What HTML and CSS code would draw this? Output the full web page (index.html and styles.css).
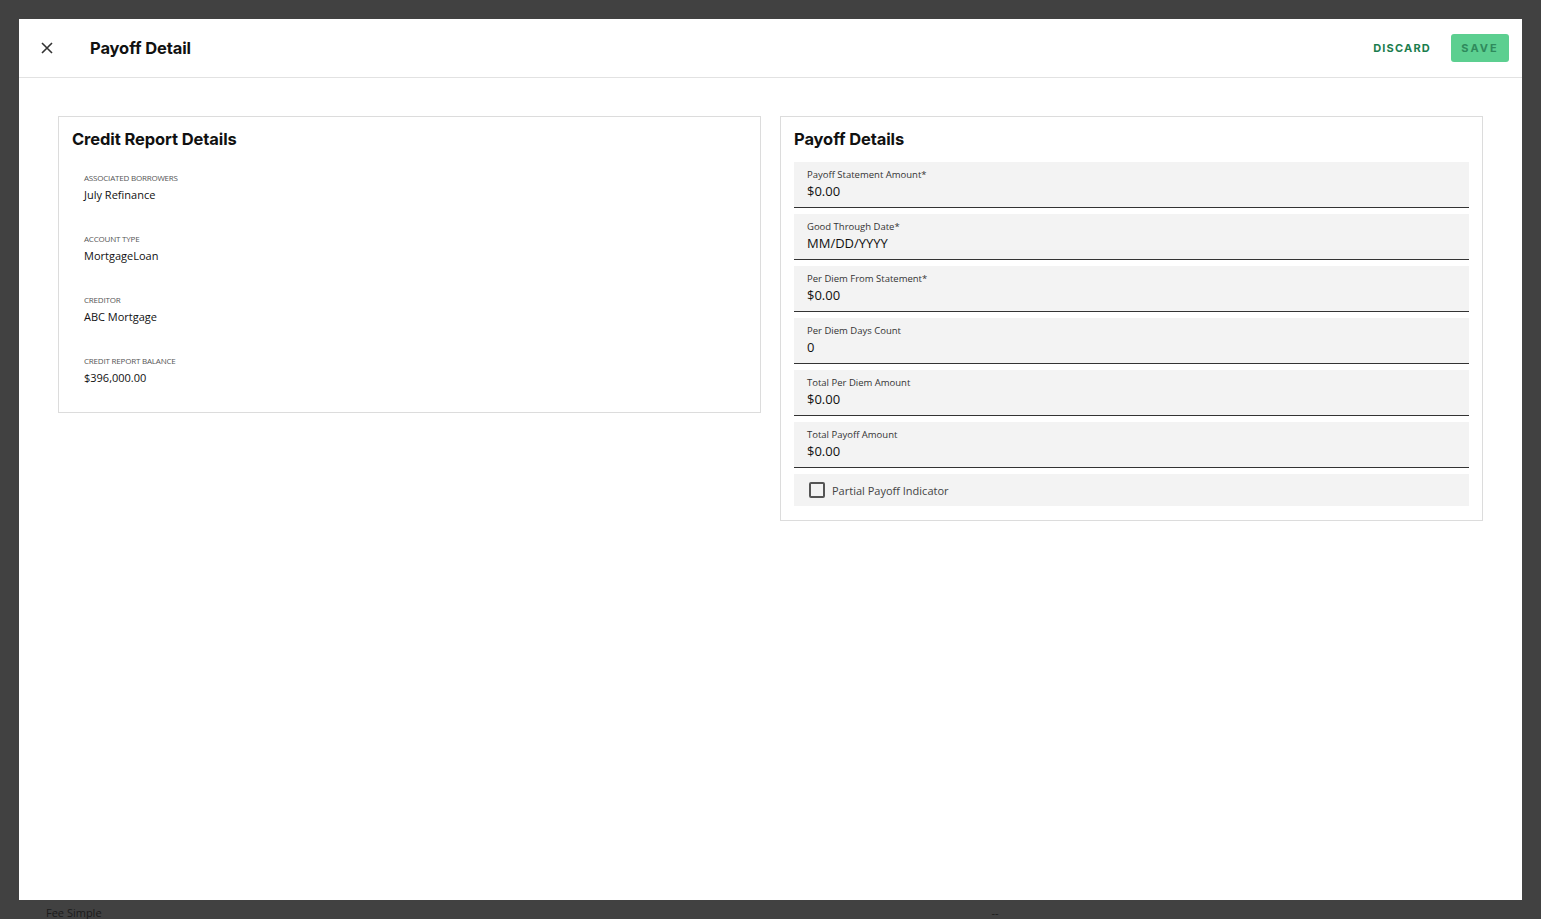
FILE: index.html
```html
<!DOCTYPE html>
<html lang="en">
    <head>
        <meta charset="UTF-8">
        <meta name="viewport" content="width=device-width, initial-scale=1.0">
        <title>Payoff Detail</title>
        <link rel="stylesheet" href="styles.css">
    </head>
<body>
    <div class="page-behind">
        <div class="behind-row">
            <span class="behind-cell">Fee Simple</span>
            <span class="behind-cell dash">--</span>
        </div>
    </div>

    <div class="modal">
        <div class="modal-header">
            <button class="close-btn" aria-label="Close">
                <svg width="12" height="12" viewBox="0 0 12 12">
                    <path d="M1 1 L11 11 M11 1 L1 11" stroke="#333" stroke-width="1.6" fill="none"/>
                </svg>
            </button>
            <h1>Payoff Detail</h1>
            <div class="header-actions">
                <button class="discard-btn">DISCARD</button>
                <button class="save-btn">SAVE</button>
            </div>
        </div>

        <div class="modal-body">
            <div class="card">
                <h2>Credit Report Details</h2>
                <div class="info-list">
                    <div class="info-item">
                        <div class="info-label">Associated Borrowers</div>
                        <div class="info-value">July Refinance</div>
                    </div>
                    <div class="info-item">
                        <div class="info-label">Account Type</div>
                        <div class="info-value">MortgageLoan</div>
                    </div>
                    <div class="info-item">
                        <div class="info-label">Creditor</div>
                        <div class="info-value">ABC Mortgage</div>
                    </div>
                    <div class="info-item">
                        <div class="info-label">Credit Report Balance</div>
                        <div class="info-value">$396,000.00</div>
                    </div>
                </div>
            </div>

            <div class="card">
                <h2>Payoff Details</h2>
                <div class="field-list">
                    <div class="field">
                        <label>Payoff Statement Amount*</label>
                        <div class="field-value">$0.00</div>
                    </div>
                    <div class="field">
                        <label>Good Through Date*</label>
                        <div class="field-value">MM/DD/YYYY</div>
                    </div>
                    <div class="field">
                        <label>Per Diem From Statement*</label>
                        <div class="field-value">$0.00</div>
                    </div>
                    <div class="field">
                        <label>Per Diem Days Count</label>
                        <div class="field-value">0</div>
                    </div>
                    <div class="field">
                        <label>Total Per Diem Amount</label>
                        <div class="field-value">$0.00</div>
                    </div>
                    <div class="field">
                        <label>Total Payoff Amount</label>
                        <div class="field-value">$0.00</div>
                    </div>
                    <div class="check-field">
                        <span class="checkbox"></span>
                        <span>Partial Payoff Indicator</span>
                    </div>
                </div>
            </div>
        </div>
    </div>
</body>
</html>
```

FILE: styles.css
```css
body {
    margin: 0;
    height: 919px;
    overflow: hidden;
    background-color: #414141;
    font-family: "Open Sans", "Noto Sans", sans-serif;
    color: #111;
}
.page-behind {
    padding-top: 905px;
}
.behind-row {
    display: flex;
    padding-left: 46px;
}
.behind-cell {
    font-size: 11px;
    color: #1a1a1a;
}
.behind-cell.dash {
    margin-left: 890px;
}
.modal {
    position: fixed;
    top: 19px;
    left: 19px;
    width: 1503px;
    height: 881px;
    background: #fff;
}
.modal-header {
    display: flex;
    align-items: center;
    height: 58px;
    border-bottom: 1px solid #e2e2e2;
    padding: 0 13px 0 20px;
}
.close-btn {
    border: none;
    background: none;
    padding: 0;
    width: 16px;
    height: 16px;
    display: flex;
    align-items: center;
    justify-content: center;
    cursor: pointer;
}
h1 {
    font-family: Inter, "Noto Sans", sans-serif;
    font-size: 16.5px;
    font-weight: 700;
    margin: 0 0 0 35px;
    letter-spacing: -0.1px;
}
.header-actions {
    margin-left: auto;
    display: flex;
    align-items: center;
}
.discard-btn {
    border: none;
    background: none;
    font-family: Inter, "Noto Sans", sans-serif;
    font-size: 11px;
    font-weight: 700;
    letter-spacing: 1.2px;
    color: #1b7d4e;
    padding: 0;
    margin-right: 20px;
    cursor: pointer;
}
.save-btn {
    border: none;
    background: #5ccf90;
    color: #2f8a5c;
    font-family: Inter, "Noto Sans", sans-serif;
    font-size: 11px;
    font-weight: 700;
    letter-spacing: 2px;
    width: 58px;
    height: 28px;
    border-radius: 3px;
    cursor: pointer;
}
.modal-body {
    display: grid;
    grid-template-columns: 1fr 1fr;
    gap: 19px;
    align-items: start;
    padding: 38px 39px;
}
.card {
    border: 1px solid #dcdcdc;
    padding: 0 13px 14px 13px;
}
h2 {
    font-family: Inter, "Noto Sans", sans-serif;
    font-size: 16.5px;
    font-weight: 700;
    margin: 0;
    height: 45px;
    line-height: 45px;
    letter-spacing: -0.1px;
}
.info-list {
    padding: 10px 12px 0;
}
.info-item {
    height: 61px;
}
.info-item:last-child {
    height: 43px;
}
.info-label {
    font-size: 8px;
    text-transform: uppercase;
    color: #555;
    letter-spacing: -0.2px;
}
.info-value {
    font-size: 11px;
    margin-top: 4px;
    color: #111;
}
.field-list {
    display: flex;
    flex-direction: column;
    gap: 6px;
}
.field {
    background: #f3f3f3;
    border-bottom: 1px solid #333;
    height: 46px;
    box-sizing: border-box;
    padding: 6px 13px 0;
}
.field label {
    display: block;
    font-size: 9.5px;
    color: #333;
}
.field-value {
    font-size: 13px;
    margin-top: 1px;
    color: #111;
}
.check-field {
    background: #f3f3f3;
    height: 32px;
    display: flex;
    align-items: center;
    padding-left: 15px;
    font-size: 11px;
    color: #444;
}
.checkbox {
    width: 12px;
    height: 12px;
    border: 2px solid #555;
    border-radius: 2px;
    margin-right: 7px;
}
```
